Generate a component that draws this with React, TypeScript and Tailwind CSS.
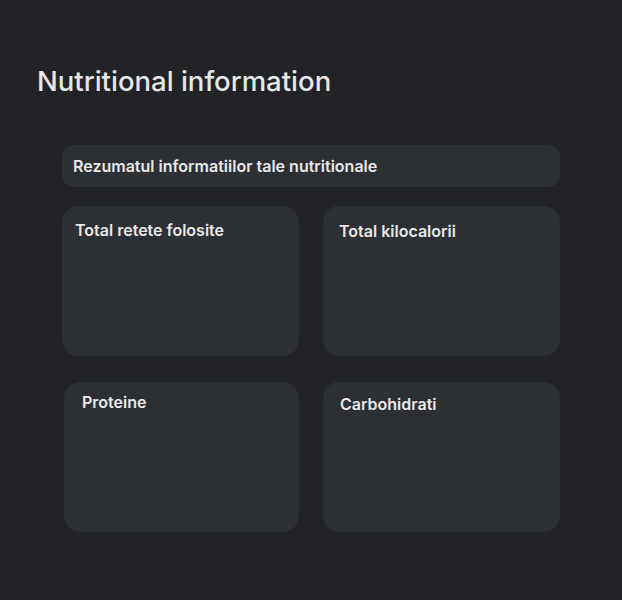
import React from "react";

function Card({ title, className }: { title: string; className: string }) {
  return (
    <div className={"rounded-2xl bg-[#2c2f33] h-[150px] " + className}>
      <div className="text-[16px] font-semibold text-[#e8e8e8] leading-5">{title}</div>
    </div>
  );
}

export default function App() {
  return (
    <div className="w-[622px] h-[600px] bg-[#212327] font-['Inter',sans-serif] pt-[65px]">
      <h1 className="pl-[37px] text-[27.5px] font-medium text-[#e6e6e6] leading-8">Nutritional information</h1>
      <div className="mt-[48px] ml-[62px] w-[498px]">
        <div className="h-[42px] rounded-xl bg-[#2c2f33] flex items-center px-[11px]">
          <span className="text-[16px] font-semibold text-[#e8e8e8]">Rezumatul informatiilor tale nutritionale</span>
        </div>
        <div className="mt-[19px] grid grid-cols-[237px_237px] gap-x-[24px] gap-y-[26px]">
          <Card title="Total retete folosite" className="pt-[14px] pl-[13px]" />
          <Card title="Total kilocalorii" className="pt-[15px] pl-[16px]" />
          <Card title="Proteine" className="ml-[2px] pt-[10px] pl-[18px]" />
          <Card title="Carbohidrati" className="pt-[12px] pl-[17px]" />
        </div>
      </div>
    </div>
  );
}
